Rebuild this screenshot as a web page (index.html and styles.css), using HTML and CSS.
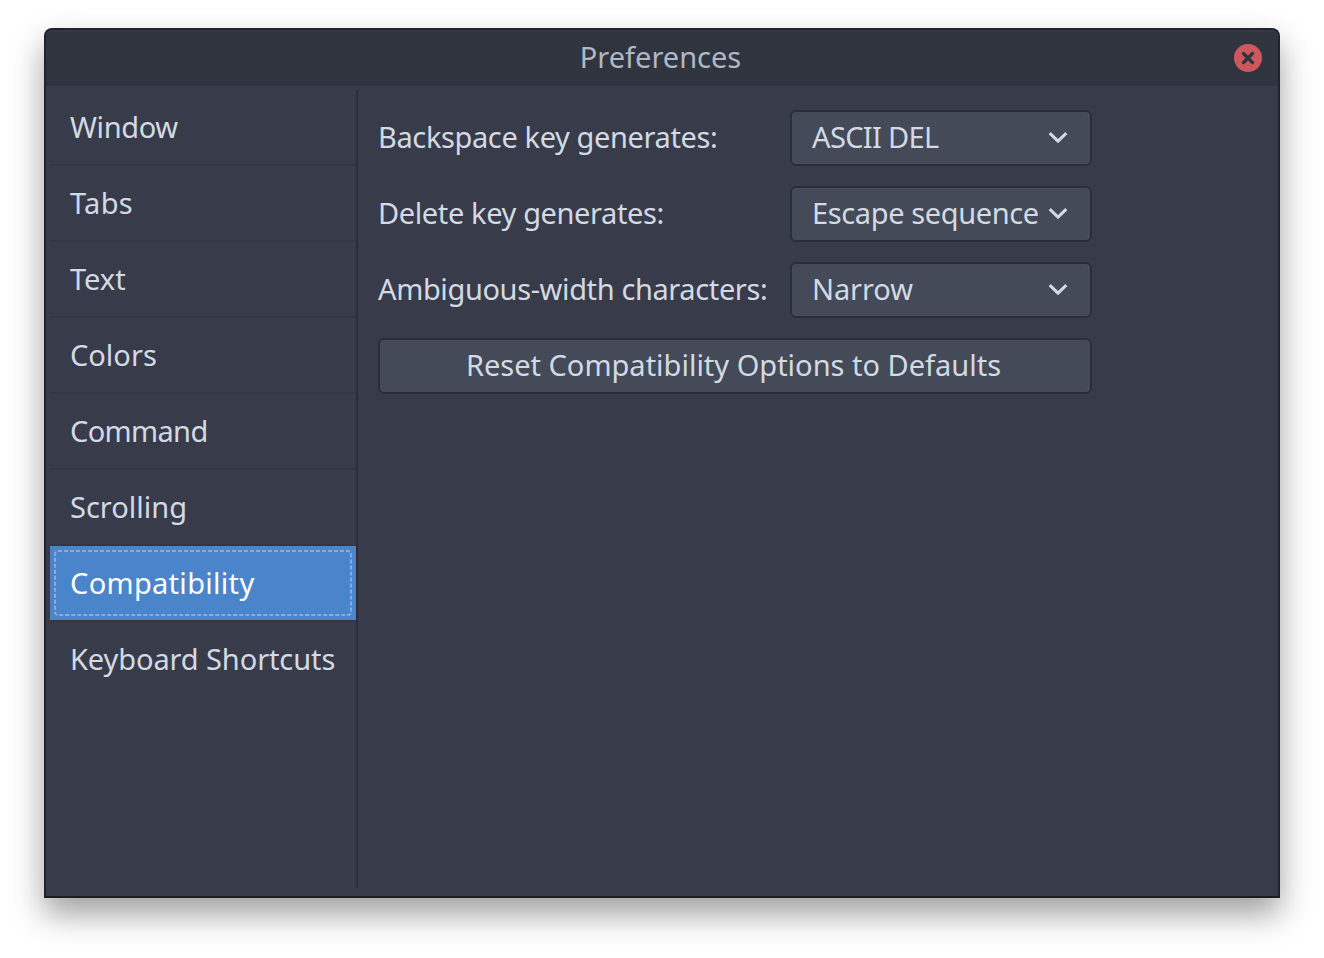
FILE: index.html
```html
<!DOCTYPE html>
<html lang="en">
<head>
<meta charset="utf-8">
<title>Preferences</title>
<link rel="stylesheet" href="styles.css">
</head>
<body>
<main class="window">
  <header class="titlebar">
    <h1 class="title">Preferences</h1>
    <button class="close" aria-label="Close">
      <svg width="28" height="28" viewBox="0 0 28 28"><circle cx="14" cy="14" r="14" fill="#cc575d"/><path d="M9.5 9.5l9 9M18.5 9.5l-9 9" stroke="#2f343f" stroke-width="3.3" stroke-linecap="round"/></svg>
    </button>
  </header>
  <div class="content">
    <nav class="sidebar">
      <a class="item tight">Window</a>
      <a class="item loose">Tabs</a>
      <a class="item">Text</a>
      <a class="item">Colors</a>
      <a class="item tighter">Command</a>
      <a class="item">Scrolling</a>
      <a class="item loose selected">Compatibility
        <svg class="focus" width="298" height="66" viewBox="0 0 298 66"><rect x="1" y="1" width="296" height="64" rx="3" fill="none" stroke="#86ade0" stroke-width="2" stroke-dasharray="4 2"/></svg>
      </a>
      <a class="item snug">Keyboard Shortcuts</a>
    </nav>
    <section class="panel">
      <div class="label tight">Backspace key generates:</div>
      <div class="select tighter">ASCII DEL
        <svg class="chevron" width="20" height="14" viewBox="0 0 20 14"><path d="M1.7 3.2L10 11.2L18.3 3.2" fill="none" stroke="#d3dae3" stroke-width="3"/></svg>
      </div>
      <div class="label tight">Delete key generates:</div>
      <div class="select tight">Escape sequence
        <svg class="chevron" width="20" height="14" viewBox="0 0 20 14"><path d="M1.7 3.2L10 11.2L18.3 3.2" fill="none" stroke="#d3dae3" stroke-width="3"/></svg>
      </div>
      <div class="label tight">Ambiguous-width characters:</div>
      <div class="select snug">Narrow
        <svg class="chevron" width="20" height="14" viewBox="0 0 20 14"><path d="M1.7 3.2L10 11.2L18.3 3.2" fill="none" stroke="#d3dae3" stroke-width="3"/></svg>
      </div>
      <button class="reset">Reset Compatibility Options to Defaults</button>
    </section>
  </div>
</main>
</body>
</html>
```
FILE: styles.css
```css
* { box-sizing: border-box; }

body {
  margin: 0;
  min-height: 958px;
  padding: 28px 44px;
  background: #fff;
  color: #d3dae3;
  font: 29px/38px "Noto Sans", sans-serif;
  white-space: nowrap;
}

.window {
  width: 1236px;
  height: 870px;
  display: flex;
  flex-direction: column;
  border: 2px solid #20232b;
  border-bottom-color: #1b1c24;
  border-radius: 8px 8px 0 0;
  background: #383c4a;
  box-shadow: 0 16px 32px rgba(0, 0, 0, .38);
}

.titlebar {
  height: 56px;
  display: grid;
  grid-template-columns: 44px 1fr 44px;
  align-items: center;
  border-top: 2px solid #353945;
  border-radius: 6px 6px 0 0;
  background: #2f343f;
}

.title {
  grid-column: 2;
  margin: 0;
  padding: 0 3px 5px 0;
  text-align: center;
  font-size: 29px;
  font-weight: 400;
  color: #afb8c5;
}

.close {
  height: 28px;
  width: 28px;
  padding: 0;
  border: 0;
  background: none;
  margin-bottom: 2px;
}

.close svg { display: block; }

.content {
  flex: 1;
  display: flex;
  padding: 4px 4px 8px;
}

.sidebar {
  width: 308px;
  border-right: 2px solid #2b2e39;
}

.item {
  height: 76px;
  display: flex;
  align-items: center;
  padding: 0 0 1px 20px;
  border-bottom: 2px solid #343845;
}

.item:last-child { border-bottom-color: transparent; }

.selected {
  background: #4a85cb;
  background-clip: padding-box;
  color: #fff;
  position: relative;
}

.focus {
  position: absolute;
  inset: 4px;
}

.snug { letter-spacing: -.1px; }
.tight { letter-spacing: -.38px; }
.tighter { letter-spacing: -.65px; }
.loose { letter-spacing: .3px; }

.panel {
  display: grid;
  grid-template-columns: 392px 302px;
  grid-auto-rows: 56px;
  column-gap: 20px;
  row-gap: 20px;
  padding: 20px 0 0 20px;
}

.label {
  display: flex;
  align-items: center;
  padding-bottom: 3px;
}

.select, .reset {
  border: 2px solid #2b2e39;
  border-radius: 6px;
  background: #444a58;
}

.select {
  display: flex;
  align-items: center;
  justify-content: space-between;
  padding: 0 22px 3px 20px;
}

.chevron { flex: none; }

.reset {
  grid-column: 1 / 3;
  padding: 0 3px 3px 0;
  font: inherit;
  color: inherit;
}
```
